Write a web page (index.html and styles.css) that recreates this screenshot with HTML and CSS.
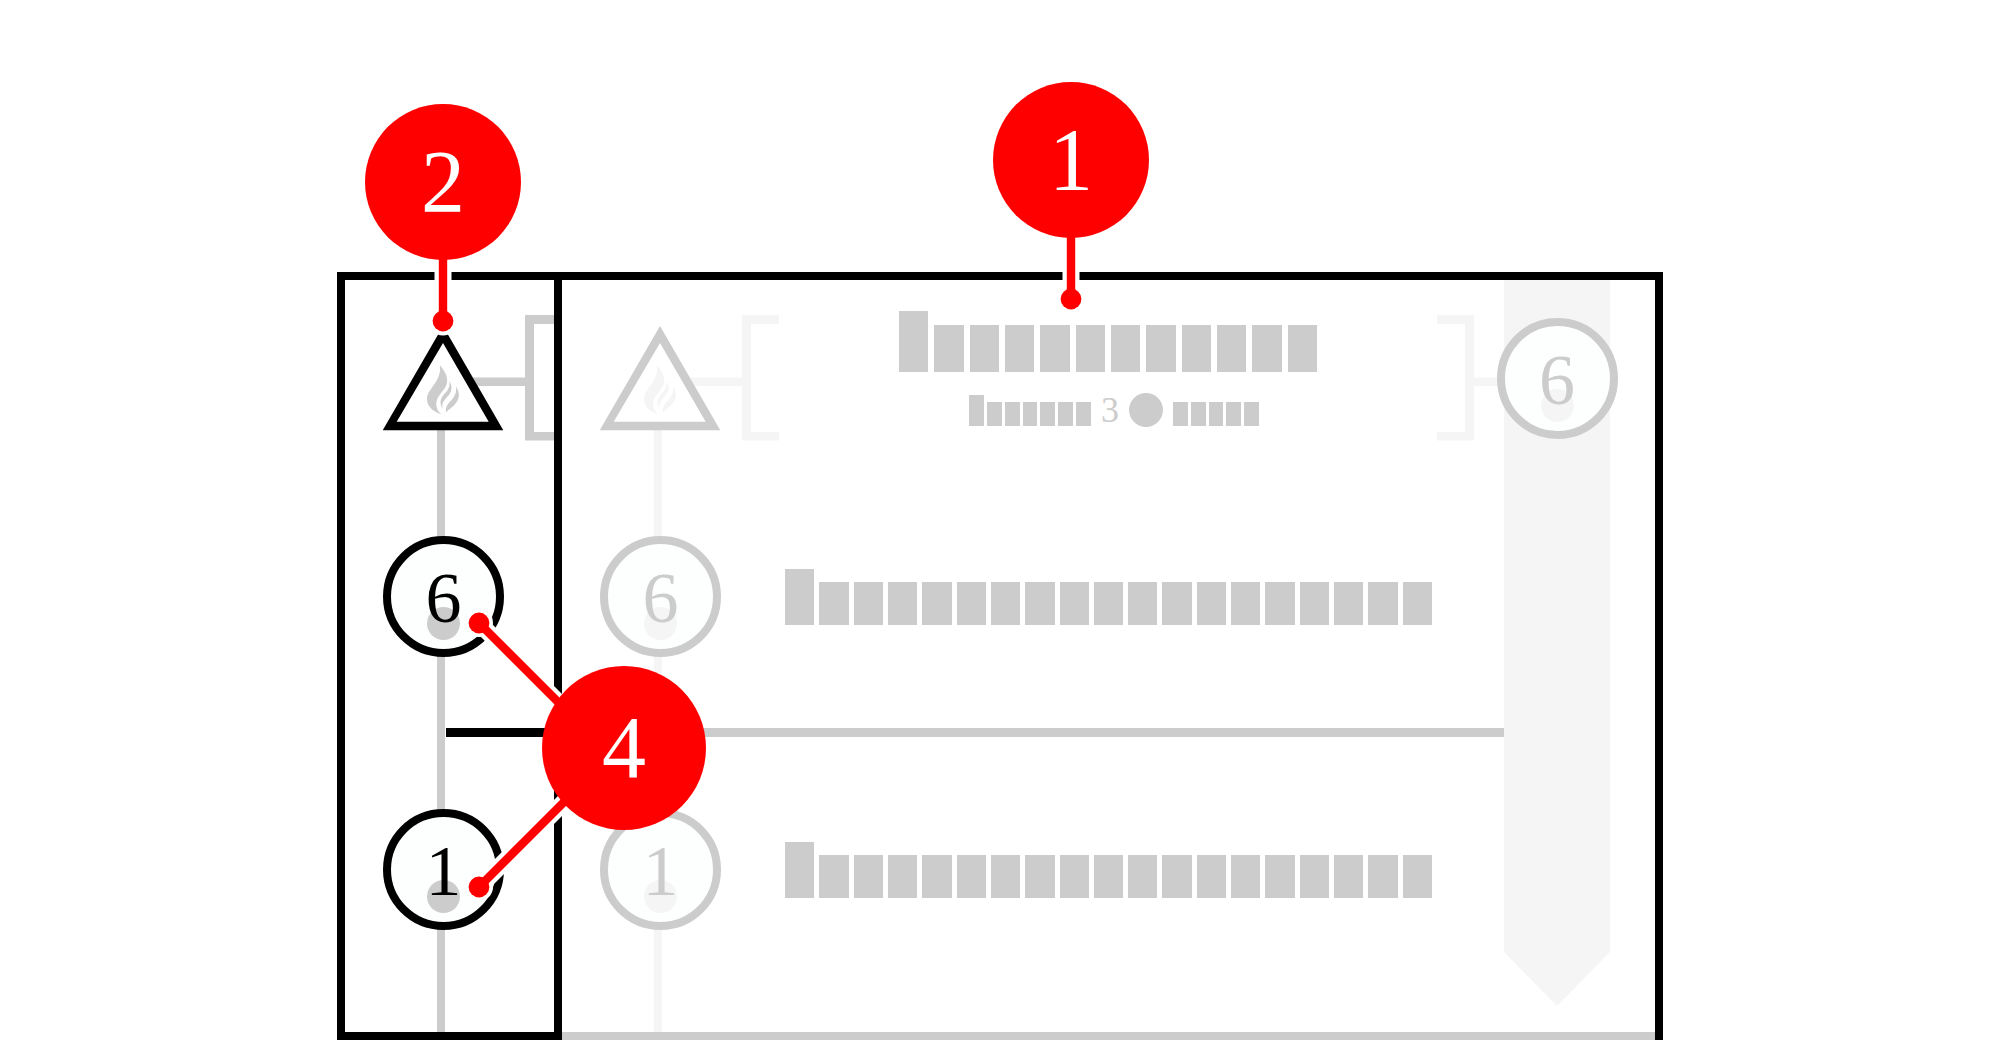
FILE: index.html
```html
<!DOCTYPE html>
<html lang="en">
<head>
<meta charset="utf-8">
<title>Card anatomy</title>
<link rel="stylesheet" href="styles.css">
</head>
<body>
<svg class="defs" aria-hidden="true">
  <symbol id="head" viewBox="0 0 179 126">
    <path class="soft" d="M90 62.5H142V0H179V9H151V117H179V125.5H142V71H90Z"/>
    <path class="strong" fill-rule="evenodd" d="M60 11L120.3 115.3H-.3ZM60 28L13.7 106.7H105.7Z"/>
    <g class="soft" transform="translate(-23 5) scale(.3333)">
      <path d="M240 136C256 156 268 176 258 198C248 218 227 230 229 256C230 268 236 277 244 282C220 276 200 258 201 236C203 205 245 186 240 136Z"/>
      <path d="M268 182C280 202 274 218 262 230C250 243 244 252 248 266C238 252 240 236 252 223C264 211 271 200 268 182Z"/>
      <path d="M288 199C301 219 299 238 285 253C274 265 263 270 259 278C255 264 261 254 272 243C284 231 291 217 288 199Z"/>
    </g>
  </symbol>
  <symbol id="stem" viewBox="0 0 30 80">
    <path d="M15 0V64" stroke="#fff" stroke-width="17"/>
    <circle cx="15" cy="64" r="14.5" fill="#fff"/>
    <path d="M15 0V64" stroke="#f00" stroke-width="8.4"/>
    <circle cx="15" cy="64" r="10.4" fill="#f00"/>
  </symbol>
</svg>

<main class="diagram">
  <div class="card">
    <section class="panel detail">
      <div class="track">
        <svg class="head"><use href="#head"/></svg>
        <div class="marker"><span>6</span></div>
        <div class="rule"></div>
        <div class="marker"><span>1</span></div>
      </div>
    </section>

    <section class="panel faded">
      <div class="track">
        <svg class="head"><use href="#head"/></svg>
        <div class="marker"><span>6</span></div>
        <div class="rule"></div>
        <div class="marker"><span>1</span></div>
      </div>
      <div class="body">
        <header class="title">
          <div class="names">
            <div class="bars large"><i></i><i></i><i></i><i></i><i></i><i></i><i></i><i></i><i></i><i></i><i></i><i></i></div>
            <div class="cost">
              <div class="bars small"><i></i><i></i><i></i><i></i><i></i><i></i><i></i></div>
              <span>3</span>
              <b class="token"></b>
              <div class="bars small even"><i></i><i></i><i></i><i></i><i></i></div>
            </div>
          </div>
          <svg class="bracket" viewBox="0 0 67 126"><path class="soft" d="M0 0H37V62.5H67V71H37V125.5H0V117H28V9H0Z"/></svg>
        </header>
        <div class="bars line"><i></i><i></i><i></i><i></i><i></i><i></i><i></i><i></i><i></i><i></i><i></i><i></i><i></i><i></i><i></i><i></i><i></i><i></i><i></i></div>
        <div class="rule"></div>
        <div class="bars line"><i></i><i></i><i></i><i></i><i></i><i></i><i></i><i></i><i></i><i></i><i></i><i></i><i></i><i></i><i></i><i></i><i></i><i></i><i></i></div>
      </div>
      <div class="ribbon">
        <div class="ribbon-shape"></div>
        <div class="marker"><span>6</span></div>
      </div>
    </section>
  </div>

  <div class="callout one">
    <div class="bubble">1</div>
    <svg class="stem"><use href="#stem"/></svg>
  </div>
  <div class="callout two">
    <div class="bubble">2</div>
    <svg class="stem"><use href="#stem"/></svg>
  </div>
  <div class="callout four">
    <svg class="arms" viewBox="0 0 241 308">
      <g fill="#fff" stroke="#fff">
        <path d="M14 29L135 150M14 293L135 172" stroke-width="17"/>
        <circle cx="14" cy="29" r="14" stroke="none"/>
        <circle cx="14" cy="293" r="14" stroke="none"/>
      </g>
      <g fill="#f00" stroke="#f00">
        <path d="M14 29L135 150M14 293L135 172" stroke-width="8.4"/>
        <circle cx="14" cy="29" r="10.4" stroke="none"/>
        <circle cx="14" cy="293" r="10.4" stroke="none"/>
      </g>
    </svg>
    <div class="bubble big">4</div>
  </div>
</main>
</body>
</html>
```

FILE: styles.css
```css
* {
  box-sizing: border-box;
}

body {
  margin: 0;
  background: #fff;
  font-family: "Liberation Serif", "Times New Roman", serif;
}

.defs {
  position: absolute;
  width: 0;
  height: 0;
}

.diagram {
  position: relative;
  display: flex;
  width: 100%;
  max-width: 1326px;
  min-height: 100vh;
  margin: 0 auto;
  padding-top: 272px;
}

.card {
  display: grid;
  grid-template-columns: 217px 1fr;
  flex: 1;
  border: 8px solid #000;
  border-bottom: 0;
}

.panel {
  display: flex;
  border-bottom: 8px solid var(--strong);
}

.detail {
  --strong: #000;
  --soft: #ccc;
  overflow: hidden;
  border-right: 8px solid #000;
}

.faded {
  --strong: #ccc;
  --soft: #f5f5f5;
  padding-right: 45px;
}

.strong {
  fill: var(--strong);
}

.soft {
  fill: var(--soft);
}

/* Left column: heading symbol and numbered markers on a vertical rail */
.track {
  flex: none;
  width: 217px;
  padding: 35px 0 0 38px;
  background: linear-gradient(var(--soft), var(--soft)) no-repeat 92px 150px / 8px 100%;
}

.head {
  display: block;
  width: 179px;
  height: 126px;
  margin-bottom: 95px;
  overflow: visible;
}

.marker {
  position: relative;
  display: flex;
  align-items: center;
  justify-content: center;
  width: 121px;
  height: 121px;
  padding-top: 2px;
  border: 8px solid var(--strong);
  border-radius: 50%;
  background: #fdffff;
  color: var(--strong);
  font-size: 72px;
  line-height: 80px;
}

.marker::before {
  content: "";
  position: absolute;
  top: 63px;
  left: 36px;
  width: 33px;
  height: 33px;
  border-radius: 50%;
  background: var(--soft);
}

.marker span {
  position: relative;
}

.rule {
  height: 9px;
  background: var(--strong);
}

.track .rule {
  margin: 71px 0 72px 63px;
}

.body {
  flex: 1;
  padding-top: 31px;
}

.title {
  display: flex;
  height: 258px;
}

.names {
  display: flex;
  flex: 1;
  flex-direction: column;
  align-items: center;
  gap: 21px;
}

.bracket {
  width: 67px;
  height: 126px;
  margin-top: 4px;
}

/* Rows of blocks standing in for words; the first block is the capital */
.bars {
  display: grid;
  grid-auto-flow: column;
  grid-auto-columns: 1fr;
  align-items: end;
}

.bars i {
  background: #ccc;
}

.large {
  gap: 6px;
  width: 418px;
}

.large i {
  height: 47px;
}

.large i:first-child {
  height: 61px;
}

.small {
  gap: 3px;
  width: 122px;
  height: 31px;
}

.small i {
  height: 24px;
}

.small i:first-child {
  height: 31px;
}

.small.even {
  width: 86px;
}

.small.even i {
  height: 24px;
}

.line {
  gap: 5px;
  height: 56px;
  margin: 0 72px 0 6px;
}

.line i {
  height: 43px;
}

.line i:first-child {
  height: 56px;
}

.body > .rule {
  margin: 103px 0 105px;
}

.cost {
  display: flex;
  align-items: center;
  gap: 10px;
  height: 34px;
  padding-left: 12px;
  color: #ccc;
  font-size: 36px;
  line-height: 34px;
}

.token {
  width: 34px;
  height: 34px;
  border-radius: 50%;
  background: #ccc;
}

.ribbon {
  display: grid;
  grid-template-columns: 106px;
  align-items: start;
  justify-items: center;
}

.ribbon > * {
  grid-area: 1 / 1;
}

.ribbon-shape {
  width: 106px;
  height: 726px;
  background: var(--soft);
  clip-path: polygon(0 0, 100% 0, 100% 672px, 50% 100%, 0 672px);
}

.ribbon .marker {
  margin-top: 38px;
}

/* Numbered callouts lie over the card */
.callout {
  position: absolute;
  display: flex;
  flex-direction: column;
  align-items: center;
}

.one {
  top: 82px;
  left: 656px;
}

.two {
  top: 104px;
  left: 28px;
}

.four {
  top: 594px;
  left: 128px;
  display: grid;
  align-items: center;
  justify-items: end;
}

.four > * {
  grid-area: 1 / 1;
}

.bubble {
  z-index: 1;
  display: flex;
  align-items: center;
  justify-content: center;
  width: 156px;
  height: 156px;
  border-radius: 50%;
  background: #f00;
  color: #fff;
  font-size: 88px;
  line-height: 96px;
}

.big {
  width: 164px;
  height: 164px;
}

.stem {
  width: 30px;
  height: 80px;
  margin-top: -3px;
}

.arms {
  width: 241px;
  height: 308px;
  overflow: visible;
}
```
